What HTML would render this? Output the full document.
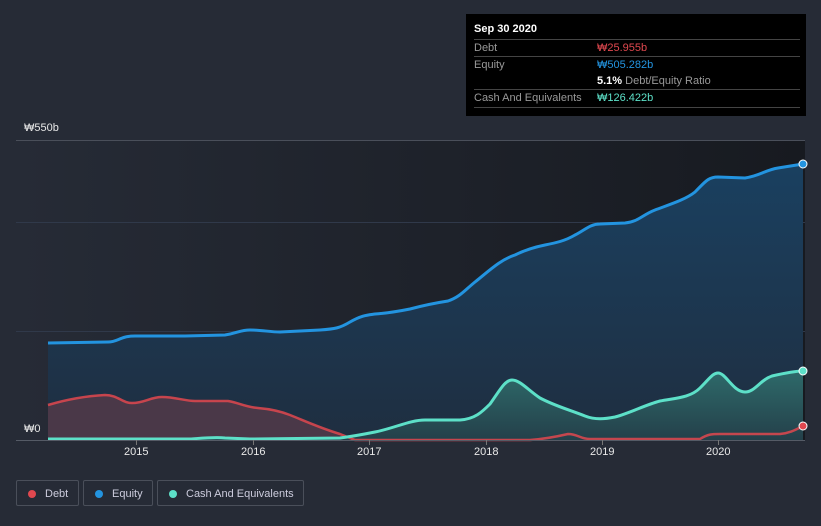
<!DOCTYPE html>
<html><head><style>
body{margin:0;width:821px;height:526px;background:#262b36;font-family:"Liberation Sans",sans-serif;overflow:hidden;position:relative}
.tt{position:absolute;left:466px;top:14px;width:340px;height:102px;background:#000;color:#fff;font-size:11px}
.row{position:absolute;left:8px;width:326px;border-top:1px solid #444;height:17px;line-height:17px;color:#999}
.row span{position:absolute;left:123px}
.leg{position:absolute;top:480px;height:26px;border:1px solid #4a4f5a;border-radius:2px;color:#ccd;font-size:11px;line-height:26px;box-sizing:border-box}
.leg i{position:absolute;left:11px;top:9px;width:8px;height:8px;border-radius:50%}
.lbl{position:absolute;color:#e8e8e8;font-size:11px}
</style></head><body>
<svg width="821" height="526" style="position:absolute;left:0;top:0">
<defs>
<linearGradient id="bg" x1="0" x2="1" y1="0" y2="0"><stop offset="0" stop-color="#262b36"/><stop offset="1" stop-color="#171a20"/></linearGradient>
<linearGradient id="eq" x1="0" x2="0" y1="0" y2="1"><stop offset="0" stop-color="#1a4060"/><stop offset="1" stop-color="#1f2e40"/></linearGradient>
<linearGradient id="ca" x1="0" x2="0" y1="0" y2="1"><stop offset="0" stop-color="#2e6a6a"/><stop offset="1" stop-color="#24404a"/></linearGradient>
</defs>
<rect x="16" y="140" width="789" height="300" fill="url(#bg)"/>
<line x1="16" y1="140.5" x2="805" y2="140.5" stroke="#4a4f5a"/>
<line x1="16" y1="222.5" x2="805" y2="222.5" stroke="#30394a"/>
<line x1="16" y1="331.5" x2="805" y2="331.5" stroke="#30394a"/>
<path d="M48,343 L108,342 C118,342 120,336 135,336 L185,336 L225,335 C238,333 240,330 250,330 C262,330 270,332 280,332 L320,330 C335,329 340,328 350,322 C362,315 368,315 375,314 C390,313 400,311 410,309 C425,305 435,303 448,301 C460,297 465,290 475,282 C490,270 500,260 515,255 C525,250 535,247 545,245 C555,243 565,241 575,235 C585,230 590,224 600,224 L625,223 C638,222 642,215 655,210 C668,205 685,200 695,192 C705,182 708,177 718,177 L745,178 C760,176 765,170 778,168 L803,164 L803,440 L48,440 Z" fill="url(#eq)"/>
<path d="M48,343 L108,342 C118,342 120,336 135,336 L185,336 L225,335 C238,333 240,330 250,330 C262,330 270,332 280,332 L320,330 C335,329 340,328 350,322 C362,315 368,315 375,314 C390,313 400,311 410,309 C425,305 435,303 448,301 C460,297 465,290 475,282 C490,270 500,260 515,255 C525,250 535,247 545,245 C555,243 565,241 575,235 C585,230 590,224 600,224 L625,223 C638,222 642,215 655,210 C668,205 685,200 695,192 C705,182 708,177 718,177 L745,178 C760,176 765,170 778,168 L803,164" fill="none" stroke="#2394e0" stroke-width="3"/>
<path d="M48,405 C65,400 85,396 105,395 C118,395 122,403 132,403 C145,403 150,397 162,397 C175,397 185,401 195,401 L228,401 C240,403 245,407 258,408 C270,409 280,411 290,415 C305,421 320,428 340,434 L355,440 L48,440 Z" fill="#4a3848"/>
<path d="M48,439 L190,439 C205,438 215,437 225,438 L250,439 L340,438 C355,436 365,434 375,432 C395,428 410,420 425,420 L460,420 C475,419 482,412 490,404 C500,390 505,380 512,380 C520,380 528,390 540,398 C555,406 570,410 585,416 C595,420 605,419 615,417 C630,413 645,405 660,401 C675,398 690,398 700,388 C710,378 713,373 718,373 C726,373 733,392 745,392 C755,392 760,380 772,376 C785,373 795,371 803,371 L803,440 L48,440 Z" fill="url(#ca)"/>
<path d="M48,405 C65,400 85,396 105,395 C118,395 122,403 132,403 C145,403 150,397 162,397 C175,397 185,401 195,401 L228,401 C240,403 245,407 258,408 C270,409 280,411 290,415 C305,421 320,428 340,434 L355,440 L530,440 C545,439 555,437 568,434 C578,434 580,439 590,439 L700,439 C708,434 712,434 720,434 L780,434 C790,433 795,430 803,426" fill="none" stroke="#e0484f" stroke-width="2.5" opacity="0.85"/>
<path d="M48,439 L190,439 C205,438 215,437 225,438 L250,439 L340,438 C355,436 365,434 375,432 C395,428 410,420 425,420 L460,420 C475,419 482,412 490,404 C500,390 505,380 512,380 C520,380 528,390 540,398 C555,406 570,410 585,416 C595,420 605,419 615,417 C630,413 645,405 660,401 C675,398 690,398 700,388 C710,378 713,373 718,373 C726,373 733,392 745,392 C755,392 760,380 772,376 C785,373 795,371 803,371" fill="none" stroke="#5de0c8" stroke-width="3"/>
<line x1="16" y1="440.5" x2="805" y2="440.5" stroke="#555b66"/>
<g stroke="#777" stroke-width="1"><line x1="136.5" y1="440" x2="136.5" y2="445"/><line x1="253.5" y1="440" x2="253.5" y2="445"/><line x1="369.5" y1="440" x2="369.5" y2="445"/><line x1="486.5" y1="440" x2="486.5" y2="445"/><line x1="602.5" y1="440" x2="602.5" y2="445"/><line x1="718.5" y1="440" x2="718.5" y2="445"/></g>
<circle cx="803" cy="164" r="4" fill="#2394e0" stroke="#fff" stroke-width="1"/>
<circle cx="803" cy="371" r="4" fill="#5de0c8" stroke="#fff" stroke-width="1"/>
<circle cx="803" cy="426" r="4" fill="#e0484f" stroke="#fff" stroke-width="1"/>
</svg>
<div class="lbl" style="left:24px;top:122px">₩550b</div>
<div class="lbl" style="left:24px;top:423px">₩0</div>
<div class="lbl" style="left:124px;top:446px">2015</div>
<div class="lbl" style="left:241px;top:446px">2016</div>
<div class="lbl" style="left:357px;top:446px">2017</div>
<div class="lbl" style="left:474px;top:446px">2018</div>
<div class="lbl" style="left:590px;top:446px">2019</div>
<div class="lbl" style="left:706px;top:446px">2020</div>
<div class="tt">
<div style="position:absolute;left:8px;top:9px;font-weight:bold">Sep 30 2020</div>
<div class="row" style="top:25px">Debt<span style="color:#e0484f">₩25.955b</span></div>
<div class="row" style="top:42px">Equity<span style="color:#2394e0">₩505.282b</span></div>
<div class="row" style="top:59px;border-top:none"><span style="color:#999"><b style="color:#fff">5.1%</b> Debt/Equity Ratio</span></div>
<div class="row" style="top:75px">Cash And Equivalents<span style="color:#5de0c8">₩126.422b</span></div>
<div class="row" style="top:93px;height:0"></div>
</div>
<div class="leg" style="left:16px;width:63px"><i style="background:#e0484f"></i><span style="padding-left:28px">Debt</span></div>
<div class="leg" style="left:83px;width:70px"><i style="background:#2394e0"></i><span style="padding-left:28px">Equity</span></div>
<div class="leg" style="left:157px;width:147px"><i style="background:#5de0c8"></i><span style="padding-left:28px">Cash And Equivalents</span></div>
</body></html>
